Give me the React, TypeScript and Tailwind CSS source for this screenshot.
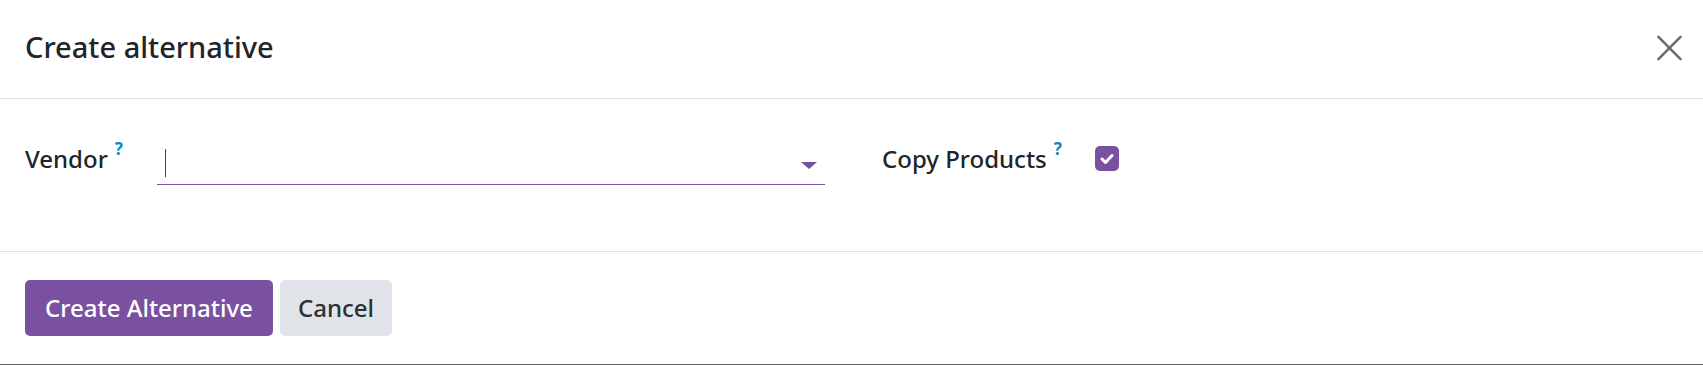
import { useState } from 'react'

const font = { fontFamily: '"Noto Sans", "Open Sans", sans-serif' }

function HelpMark() {
  return <span className="ml-[7px] -mt-[7px] text-[17px] leading-none font-bold text-[#0a8bbd]">?</span>
}

export default function App() {
  const [copy, setCopy] = useState(true)

  return (
    <div style={font} className="w-[1703px] h-[365px] bg-white text-[#212529] flex flex-col border-b border-[#5f5f5f]">
      {/* Header */}
      <div className="h-[99px] shrink-0 flex items-center justify-between pl-[25px] pr-[21px] border-b border-[#dee2e6]">
        <h4 className="text-[29px] font-medium leading-none -mt-[5px]">Create alternative</h4>
        <button className="w-[25px] h-[25px] flex items-center justify-center text-[#6b6b6b] -mt-[2px]">
          <svg width="26" height="26" viewBox="0 0 26 26" fill="none" stroke="currentColor" strokeWidth="2.6" strokeLinecap="round">
            <path d="M1.5 1.5 L24.5 24.5 M24.5 1.5 L1.5 24.5" />
          </svg>
        </button>
      </div>

      {/* Body */}
      <div className="h-[153px] shrink-0 flex items-start pt-[44px] pl-[25px] border-b border-[#dee2e6]">
        <div className="flex items-start">
          <label className="w-[132px] text-[24px] font-medium leading-none pt-[4px] flex items-start">
            Vendor
            <HelpMark />
          </label>
          <div className="relative w-[668px] h-[42px] border-b border-[#7a50a0]">
            <div className="absolute left-[8px] top-[6px] w-px h-[28px] bg-[#444]" />
            <div className="absolute right-[8px] top-[19px] w-0 h-0 border-l-[8px] border-r-[8px] border-t-[7px] border-l-transparent border-r-transparent border-t-[#7a50a0]" />
          </div>
        </div>
        <div className="flex items-start ml-[57px]">
          <label className="w-[213px] text-[24px] font-medium leading-none pt-[4px] flex items-start">
            Copy Products
            <HelpMark />
          </label>
          <button
            onClick={() => setCopy((c) => !c)}
            className={`w-[24px] h-[25px] mt-[3px] rounded-[5px] flex items-center justify-center ${
              copy ? 'bg-[#7a50a0]' : 'border border-[#adb5bd]'
            }`}
          >
            {copy && (
              <svg width="14" height="12" viewBox="0 0 14 12" fill="none" stroke="white" strokeWidth="3" strokeLinecap="round" strokeLinejoin="round">
                <path d="M2 6 L5.5 9.5 L12 2.5" />
              </svg>
            )}
          </button>
        </div>
      </div>

      {/* Footer */}
      <div className="flex-1 flex items-start gap-[7px] pt-[28px] pl-[25px]">
        <button className="h-[56px] w-[248px] rounded-[5px] bg-[#7a50a0] text-white text-[24px] font-medium">
          Create Alternative
        </button>
        <button className="h-[56px] w-[112px] rounded-[5px] bg-[#e0e3e7] text-[#2b3035] text-[24px] font-medium">
          Cancel
        </button>
      </div>
    </div>
  )
}
